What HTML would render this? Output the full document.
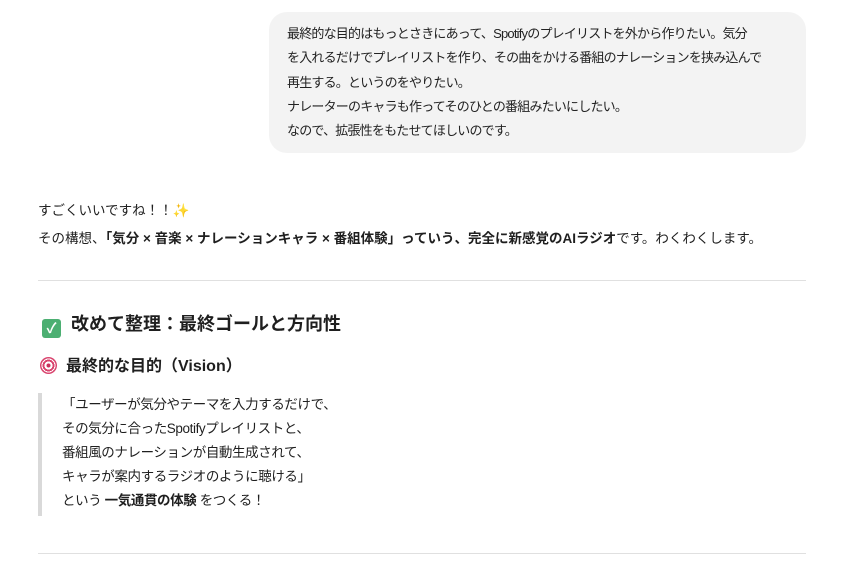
<!DOCTYPE html>
<html><head><meta charset="utf-8"><style>
body{margin:0;width:863px;height:564px;overflow:hidden;background:#fff;font-family:"Liberation Sans","Noto Sans CJK JP",sans-serif;color:#1f1f1f;font-size:14px;}
.bubble{position:absolute;left:269px;top:12px;width:501px;padding:10px 18px 10px 18px;background:#f3f3f3;border-radius:18px;line-height:24.3px;font-size:13px;letter-spacing:-0.8px;color:#222;white-space:nowrap;}
.p{position:absolute;left:38px;font-size:13.5px;line-height:24px;white-space:nowrap;}
hr{position:absolute;left:38px;width:768px;border:0;border-top:1px solid #e0e0e0;margin:0;}
h3{position:absolute;left:42px;top:310px;margin:0;font-size:18px;font-weight:bold;line-height:28px;}
h4{position:absolute;left:40px;top:355px;margin:0;font-size:16px;font-weight:bold;line-height:24px;}
.bq{position:absolute;left:38px;height:123px;border-left:4px solid #d9d9d9;padding-left:20px;font-size:13.5px;line-height:24px;top:393px;letter-spacing:-0.4px;white-space:nowrap;}
.chk{display:inline-block;width:19px;height:19px;background:#4caf72;border-radius:3px;color:#fff;font-size:14px;text-align:center;line-height:19px;vertical-align:-3px;margin-right:10px;}
.tgt{display:inline-block;width:17px;height:17px;border-radius:50%;background:radial-gradient(circle,#c7335d 0 2px,#fff 2px 4px,#d9436d 4px 6px,#fff 6px 7px,#d9436d 7px);vertical-align:-3px;margin-right:9px;}
</style></head><body>
<div class="bubble">最終的な目的はもっとさきにあって、Spotifyのプレイリストを外から作りたい。気分<br>を入れるだけでプレイリストを作り、その曲をかける番組のナレーションを挟み込んで<br>再生する。というのをやりたい。<br>ナレーターのキャラも作ってそのひとの番組みたいにしたい。<br>なので、拡張性をもたせてほしいのです。</div>
<div class="p" style="top:199px">すごくいいですね！！<span style="color:#f0a050">✨</span></div>
<div class="p" style="top:227px">その構想、<b>「気分 × 音楽 × ナレーションキャラ × 番組体験」っていう、完全に新感覚のAIラジオ</b>です。わくわくします。</div>
<hr style="top:280px">
<h3><span class="chk">✓</span>改めて整理：最終ゴールと方向性</h3>
<h4><span class="tgt"></span>最終的な目的（Vision）</h4>
<div class="bq">「ユーザーが気分やテーマを入力するだけで、<br>その気分に合ったSpotifyプレイリストと、<br>番組風のナレーションが自動生成されて、<br>キャラが案内するラジオのように聴ける」<br>という <b>一気通貫の体験</b> をつくる！</div>
<hr style="top:553px">
</body></html>
